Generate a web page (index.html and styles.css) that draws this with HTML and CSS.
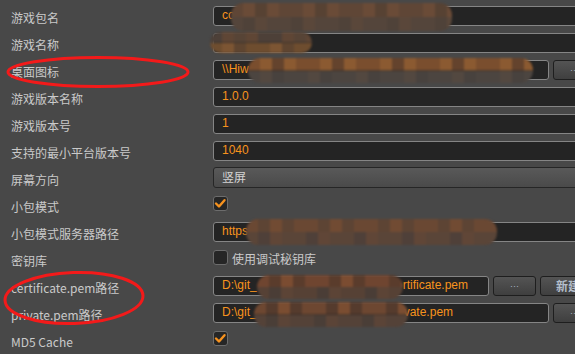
FILE: index.html
```html
<!DOCTYPE html>
<html lang="zh-CN">
<head>
    <meta charset="UTF-8">
    <meta name="viewport" content="width=device-width, initial-scale=1.0">
    <title>构建发布</title>
    <link rel="stylesheet" href="styles.css">
</head>
<body>

<div class="panel">
    <div class="row">
        <label class="name">游戏包名</label>
        <div class="ctrl"><div class="field">co</div></div>
    </div>
    <div class="row">
        <label class="name">游戏名称</label>
        <div class="ctrl"><div class="field"></div></div>
    </div>
    <div class="row">
        <label class="name">桌面图标</label>
        <div class="ctrl">
            <div class="field">\\Hiw</div>
            <button class="btn" type="button">···</button>
        </div>
    </div>
    <div class="row">
        <label class="name">游戏版本名称</label>
        <div class="ctrl"><div class="field">1.0.0</div></div>
    </div>
    <div class="row">
        <label class="name">游戏版本号</label>
        <div class="ctrl"><div class="field">1</div></div>
    </div>
    <div class="row">
        <label class="name">支持的最小平台版本号</label>
        <div class="ctrl"><div class="field">1040</div></div>
    </div>
    <div class="row">
        <label class="name">屏幕方向</label>
        <div class="ctrl"><div class="combo">竖屏</div></div>
    </div>
    <div class="row">
        <label class="name">小包模式</label>
        <div class="ctrl">
            <span class="check checked">
                <svg viewBox="0 0 15 15" width="15" height="15"><polyline points="3,7.5 6,10.5 11.5,4.2"/></svg>
            </span>
        </div>
    </div>
    <div class="row">
        <label class="name">小包模式服务器路径</label>
        <div class="ctrl"><div class="field">https</div></div>
    </div>
    <div class="row">
        <label class="name">密钥库</label>
        <div class="ctrl">
            <span class="check"></span>
            <span class="check-label">使用调试秘钥库</span>
        </div>
    </div>
    <div class="row">
        <label class="name">certificate.pem路径</label>
        <div class="ctrl">
            <div class="field">D:\git_<span class="gap gap-cert"></span>rtificate.pem</div>
            <button class="btn" type="button">···</button>
            <button class="btn btn-wide" type="button">新建</button>
        </div>
    </div>
    <div class="row">
        <label class="name">private.pem路径</label>
        <div class="ctrl">
            <div class="field">D:\git_<span class="gap gap-key"></span>vate.pem</div>
            <button class="btn" type="button">···</button>
        </div>
    </div>
    <div class="row">
        <label class="name">MD5 Cache</label>
        <div class="ctrl">
            <span class="check checked">
                <svg viewBox="0 0 15 15" width="15" height="15"><polyline points="3,7.5 6,10.5 11.5,4.2"/></svg>
            </span>
        </div>
    </div>

    <!-- redacted values -->
    <div class="mosaic m-pkg"></div>
    <div class="mosaic m-name"></div>
    <div class="mosaic m-icon"></div>
    <div class="mosaic m-server"></div>
    <div class="mosaic m-cert"></div>
    <div class="mosaic m-key"></div>

    <!-- hand drawn marks -->
    <svg class="marks" width="575" height="354" viewBox="0 0 575 354">
        <ellipse cx="98" cy="72" rx="90" ry="14.5"/>
        <ellipse cx="74" cy="298" rx="69" ry="25.5" transform="rotate(-2 74 298)"/>
    </svg>
</div>

</body>
</html>
```

FILE: styles.css
```css
body {
    margin: 0;
    background-color: #484848;
    font-family: "Noto Sans CJK SC", "Noto Sans", sans-serif;
    font-size: 12px;
    color: #cacaca;
    overflow: hidden;
}

.panel {
    position: relative;
    width: 596px;
    padding: 2px 4px 0 0;
}

.row {
    display: flex;
    align-items: center;
    height: 27px;
}

.name {
    flex: none;
    width: 202px;
    padding: 4px 0 0 11px;
    white-space: nowrap;
}

.ctrl {
    flex: 1;
    display: flex;
    align-items: center;
    gap: 4px;
}

.field {
    flex: 1;
    height: 20px;
    box-sizing: border-box;
    border: 1px solid #858585;
    border-radius: 3px;
    background-color: #242424;
    color: #f7931d;
    font-family: "Liberation Sans", Arial, sans-serif;
    font-size: 12px;
    line-height: 17px;
    padding-left: 8px;
    white-space: nowrap;
    overflow: hidden;
}

.gap {
    display: inline-block;
}

.gap-cert {
    width: 146px;
}

.gap-key {
    width: 147px;
}

.combo {
    flex: 1;
    height: 21px;
    box-sizing: border-box;
    border: 1px solid #262626;
    border-radius: 3px;
    background: linear-gradient(#595959, #4a4a4a);
    color: #d4d4d4;
    line-height: 18px;
    padding-left: 8px;
}

.btn {
    flex: none;
    width: 43px;
    height: 20px;
    box-sizing: border-box;
    padding: 0;
    border: 1px solid #1e1e1e;
    border-radius: 3px;
    background: linear-gradient(#545454, #3f3f3f);
    color: #aab6c4;
    font-family: "Liberation Sans", Arial, sans-serif;
    font-size: 9px;
    cursor: pointer;
}

.btn-wide {
    width: 56px;
    font-family: "Noto Sans CJK SC", sans-serif;
    font-size: 12px;
    font-weight: bold;
    color: #b4bfcc;
}

.check {
    flex: none;
    width: 15px;
    height: 15px;
    box-sizing: border-box;
    border: 1px solid #6c6c6c;
    border-radius: 3px;
    background-color: #262626;
    margin-bottom: 3px;
    display: flex;
}

.check svg {
    margin: -1px;
}

.check polyline {
    fill: none;
    stroke: #f7921e;
    stroke-width: 2.4;
    stroke-linecap: round;
    stroke-linejoin: round;
}

.check-label {
    margin-bottom: 1px;
}

/* pixelated redaction blocks */
.mosaic {
    position: absolute;
    border-radius: 12px;
    filter: blur(0.8px);
    background:
        repeating-linear-gradient(90deg, var(--t1) 0 12px, var(--t2) 12px 24px, var(--t3) 24px 36px, var(--t2) 36px 48px, var(--t1) 48px 60px) top / 100% 50% no-repeat,
        repeating-linear-gradient(90deg, var(--b1) 0 12px, var(--b2) 12px 24px, var(--b3) 24px 36px, var(--b1) 36px 48px) bottom / 100% 50% no-repeat;
}

.m-pkg {
    left: 231px;
    top: 3px;
    width: 221px;
    height: 28px;
    --t1: #5f4636; --t2: #6a4b37; --t3: #574233;
    --b1: #54453b; --b2: #4f4239; --b3: #5a473a;
}

.m-name {
    left: 210px;
    top: 32px;
    width: 102px;
    height: 21px;
    --t1: #4d4038; --t2: #5f4635; --t3: #574436;
    --b1: #6e4d2f; --b2: #7c5533; --b3: #5f4530;
}

.m-icon {
    left: 248px;
    top: 58px;
    width: 285px;
    height: 25px;
    --t1: #7a4e2e; --t2: #8b5a31; --t3: #64432d;
    --b1: #4c4540; --b2: #534840; --b3: #48423e;
}

.m-server {
    left: 246px;
    top: 219px;
    width: 251px;
    height: 26px;
    --t1: #6a4833; --t2: #5d4434; --t3: #714b33;
    --b1: #5a4538; --b2: #4f4039; --b3: #604637;
}

.m-cert {
    left: 257px;
    top: 275px;
    width: 146px;
    height: 24px;
    --t1: #6f4530; --t2: #5a3c2c; --t3: #7b4c31;
    --b1: #564135; --b2: #4a3d36; --b3: #5c4436;
}

.m-key {
    left: 254px;
    top: 302px;
    width: 154px;
    height: 25px;
    --t1: #6d4731; --t2: #553b2d; --t3: #7a4d31;
    --b1: #544238; --b2: #4a3e37; --b3: #5b4437;
}

.marks {
    position: absolute;
    left: 0;
    top: 0;
    pointer-events: none;
}

.marks ellipse {
    fill: none;
    stroke: #f31a1a;
    stroke-width: 3;
}
```
